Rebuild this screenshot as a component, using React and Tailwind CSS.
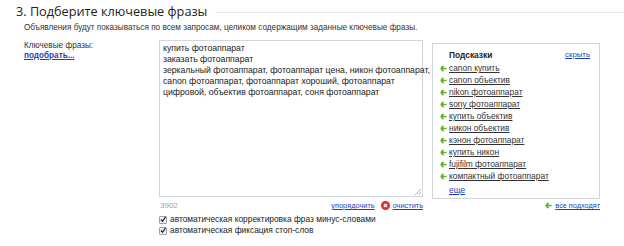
const hints = [
  "canon купить",
  "canon объектив",
  "nikon фотоаппарат",
  "sony фотоаппарат",
  "купить объектив",
  "никон объектив",
  "кэнон фотоаппарат",
  "купить никон",
  "fujifilm фотоаппарат",
  "компактный фотоаппарат",
];

const phrases = `купить фотоаппарат
заказать фотоаппарат
зеркальный фотоаппарат, фотоаппарат цена, никон фотоаппарат,
canon фотоаппарат, фотоаппарат хороший, фотоаппарат
цифровой, объектив фотоаппарат, соня фотоаппарат`;

const Arrow = () => (
  <svg width="7" height="7" viewBox="0 0 8 8" className="shrink-0">
    <path d="M1 4 L4 1 M1 4 L4 7 M1 4 H7.5" stroke="#5fae1e" strokeWidth="1.8" fill="none" />
  </svg>
);

const Check = () => (
  <span className="w-[8px] h-[8px] border border-gray-400 bg-gray-100 rounded-[1px] flex items-center justify-center mr-[3px]">
    <svg width="7" height="7" viewBox="0 0 7 7">
      <path d="M1 3.5 L3 5.5 L6.5 0.5" stroke="#222" strokeWidth="1.4" fill="none" />
    </svg>
  </span>
);

const App = () => {
  return (
    <div className="w-[624px] h-[246px] bg-white text-[#222] font-['Liberation_Sans',Arial,sans-serif] overflow-hidden">
      <div className="flex items-center pl-4 pt-[3px] h-[20px]">
        <h2 className="font-['Open_Sans',sans-serif] text-[12.7px] leading-none text-[#222] whitespace-nowrap">
          3. Подберите ключевые фразы
        </h2>
        <div className="flex-1 h-px bg-gray-200 ml-2 mt-[2px]" />
      </div>

      <p className="pl-[24px] mt-[2px] text-[8.2px] leading-[12px] text-[#333]">
        Объявления будут показываться по всем запросам, целиком содержащим заданные ключевые фразы.
      </p>

      <div className="flex mt-[6px]">
        <div className="w-[159px] pl-[24px] pt-[1px] text-[8.2px] leading-[10px]">
          <div className="text-[#333]">Ключевые фразы:</div>
          <a className="font-bold text-[#1f3fc0] underline">подобрать...</a>
        </div>

        <div className="w-[264px]">
          <div className="relative h-[157px] border border-gray-300 px-[3px] pt-[2px] text-[8.7px] leading-[11px] whitespace-pre text-[#222]">
            {phrases}
            <svg width="6" height="6" viewBox="0 0 6 6" className="absolute right-[1px] bottom-[1px]">
              <path d="M6 0 L0 6 M6 3 L3 6" stroke="#999" strokeWidth="0.8" />
            </svg>
          </div>
          <div className="flex items-center text-[7.4px] leading-[11px] mt-[3px] pl-[1px]">
            <span className="text-gray-400 text-[8px]">3902</span>
            <a className="ml-auto text-[#1f3fc0] underline">упорядочить</a>
            <span className="ml-[6px] mr-[3px] w-[9px] h-[9px] rounded-full bg-[#e32b2b] flex items-center justify-center">
              <svg width="5" height="5" viewBox="0 0 5 5">
                <path d="M0.8 0.8 L4.2 4.2 M4.2 0.8 L0.8 4.2" stroke="white" strokeWidth="1.2" />
              </svg>
            </span>
            <a className="text-[#1f3fc0] underline">очистить</a>
          </div>
          <div className="mt-[3px] text-[8.4px] leading-[11px] text-[#222] whitespace-nowrap">
            <label className="flex items-center">
              <Check />
              автоматическая корректировка фраз минус-словами
            </label>
            <label className="flex items-center">
              <Check />
              автоматическая фиксация стоп-слов
            </label>
          </div>
        </div>

        <div className="ml-[9px] mt-[3px] w-[168px]">
          <div className="h-[156px] border border-gray-300 pl-[7px] pr-[9px] pt-[5px]">
            <div className="flex items-center justify-between pl-[9px]">
              <span className="font-bold text-[8.4px] leading-[12px]">Подсказки</span>
              <a className="text-[7.8px] text-[#1f3fc0] underline leading-[12px]">скрыть</a>
            </div>
            <ul className="mt-[1px] text-[8.4px] leading-[12px]">
              {hints.map((h) => (
                <li key={h} className="flex items-center gap-[2px]">
                  <Arrow />
                  <a className="text-[#333] underline">{h}</a>
                </li>
              ))}
            </ul>
            <a className="block pl-[9px] mt-[2px] text-[8.4px] leading-[12px] text-[#1f3fc0] underline">еще</a>
          </div>
          <div className="flex items-center justify-end gap-[3px] mt-[1px] text-[7.3px] leading-[11px]">
            <Arrow />
            <a className="text-[#1f3fc0] underline">все подходят</a>
          </div>
        </div>
      </div>
    </div>
  );
};

export default App;
